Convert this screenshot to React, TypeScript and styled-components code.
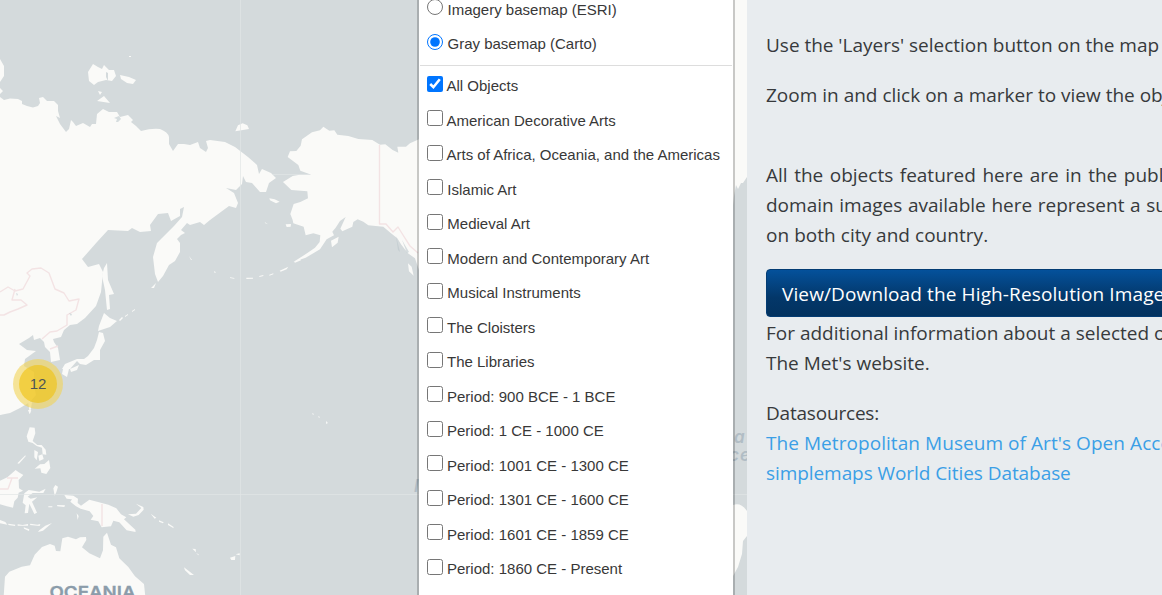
import React from "react";
import styled, { createGlobalStyle } from "styled-components";

const GlobalStyle = createGlobalStyle`
  *, *::before, *::after { box-sizing: border-box; }
  html, body { margin: 0; height: 100%; overflow: hidden; }
  body { background: #e8ecef; }
`;

const Page = styled.div`
  display: grid;
  grid-template-columns: 747px minmax(0, 1fr);
  height: 595px;
  overflow: hidden;
`;

const MapPane = styled.section`
  position: relative;
  overflow: hidden;
  background: #d4dadc;
`;

const MapDrawing = styled.svg`
  display: block;
  width: 747px;
  height: 595px;
`;

const Cluster = styled.div`
  position: absolute;
  left: 13px;
  top: 359px;
  width: 50px;
  height: 50px;
  padding: 6px;
  border-radius: 50%;
  background: rgba(241, 211, 87, 0.6);
`;

const ClusterCount = styled.div`
  width: 38px;
  height: 38px;
  border-radius: 50%;
  background: rgba(240, 194, 12, 0.6);
  color: #4c5458;
  font: 15px/38px "Liberation Sans", Arial, sans-serif;
  text-align: center;
`;

const LayersPanel = styled.div`
  position: absolute;
  left: 417px;
  top: -12px;
  width: 318px;
  height: 630px;
  padding: 2.5px 1px 0;
  border: 2px solid rgba(0, 0, 0, 0.2);
  border-top: 0;
  background: #fff;
  background-clip: padding-box;
`;

const LayerRow = styled.label`
  display: flex;
  align-items: flex-start;
  height: 34.5px;
  padding: 8.6px 0 0 7px;
`;

const LayerInput = styled.input`
  flex: none;
  width: 16px;
  height: 16px;
  margin: 0;
`;

const LayerName = styled.span<{ $gap: number }>`
  margin-left: ${(p) => p.$gap}px;
  padding-top: 1.6px;
  color: #383838;
  font: 15px/18px "Liberation Sans", Arial, sans-serif;
  white-space: nowrap;
`;

const Separator = styled.div`
  height: 1px;
  margin: 5.5px 0 1px;
  background: #ddd;
`;

const InfoPane = styled.main`
  display: flex;
  flex-direction: column;
  align-items: flex-start;
  padding: 30px 0 0 19px;
  overflow: hidden;
  color: #373a3c;
  font: 19px/30px "Open Sans", "Noto Sans", sans-serif;
`;

const Paragraph = styled.div<{ $after: number }>`
  margin-bottom: ${(p) => p.$after}px;
`;

const Line = styled.div<{ $spacing?: number; $words?: number }>`
  letter-spacing: ${(p) => p.$spacing ?? 0}px;
  word-spacing: ${(p) => p.$words ?? 0}px;
  white-space: nowrap;
`;

const SourceLink = styled.a`
  color: #3b9fe6;
  text-decoration: none;
`;

const DownloadButton = styled.button`
  flex: none;
  width: 520px;
  height: 48px;
  margin-bottom: 1px;
  padding: 1px 15px 0;
  border: 1px solid #033c73;
  border-radius: 4px;
  background: linear-gradient(#04519b, #033769 60%, #02325f);
  color: #fff;
  font: 19px/30px "Open Sans", "Noto Sans", sans-serif;
  text-align: left;
`;

type Layer = { name: string; type: "radio" | "checkbox"; checked?: boolean; gap: number };

const basemaps: Layer[] = [
  { name: "Imagery basemap (ESRI)", type: "radio", gap: 4.5 },
  { name: "Gray basemap (Carto)", type: "radio", checked: true, gap: 4.5 },
];

const overlays: Layer[] = [
  { name: "All Objects", type: "checkbox", checked: true, gap: 3.5 },
  { name: "American Decorative Arts", type: "checkbox", gap: 3.5 },
  { name: "Arts of Africa, Oceania, and the Americas", type: "checkbox", gap: 3.5 },
  { name: "Islamic Art", type: "checkbox", gap: 4.3 },
  { name: "Medieval Art", type: "checkbox", gap: 4.3 },
  { name: "Modern and Contemporary Art", type: "checkbox", gap: 4.3 },
  { name: "Musical Instruments", type: "checkbox", gap: 4.3 },
  { name: "The Cloisters", type: "checkbox", gap: 4 },
  { name: "The Libraries", type: "checkbox", gap: 4 },
  { name: "Period: 900 BCE - 1 BCE", type: "checkbox", gap: 4 },
  { name: "Period: 1 CE - 1000 CE", type: "checkbox", gap: 4 },
  { name: "Period: 1001 CE - 1300 CE", type: "checkbox", gap: 4 },
  { name: "Period: 1301 CE - 1600 CE", type: "checkbox", gap: 4 },
  { name: "Period: 1601 CE - 1859 CE", type: "checkbox", gap: 4 },
  { name: "Period: 1860 CE - Present", type: "checkbox", gap: 4 },
];

function LayerOption({ layer }: { layer: Layer }) {
  return (
    <LayerRow>
      <LayerInput type={layer.type} defaultChecked={layer.checked} />
      <LayerName $gap={layer.gap}>{layer.name}</LayerName>
    </LayerRow>
  );
}

function PacificMap() {
  return (
    <MapDrawing viewBox="0 0 747 595">
      <rect width="747" height="595" fill="#d4dadc" />
      <g fill="#fafaf8">
        {/* Siberia, the Far East and China */}
        <path d="M0 97L4 100 10 98.500 18 99 22 101 22 104 27 106 33 107.500 38 106 40 103 39 98 43 97 47 101 54 101 58 105 58 111 60 118 56 116 60 124 63 128 66 132 69 129 71 120 73 122 76 126 83 123 90 127 92 124 96 124 97 114 103 109 109 112 117 112 120 117 128 115 133 120 131 122 136 126 141 131 Q152 128 160 129 Q168 132 169 137L169 144 173 151 178 144 184 144 190 145 198 142 200 148 203 150 206 152 208 148 206 141 210 140 225 142 235 147 248 157 257 165 259 174 262 169 271 173 276 178 269 183 266 192 260 192 252 183 246 182 243 176 242 184 236 190 226 188 234 193 238 203 236 208 229 206 210 220 204 225 200 222 190 225 187 223 181 230 185 233 181 235 177 239 180 243 180 252 175 261 169 265 163 276 158 282 155 274 153 257 157 243 162 238 174 226 182 217 184 207 180 209 180 216 171 221 168 213 158 214 150 225 151 231 140 232 132 228 128 231 108 230 97 242 82 259 88 267 99 264 103 272 101 292 96 306 85 318 77 324 70 325 64 330 61 337 53 339 54 342 58 348 60 360 51 362 50 352 45 347 44 342 40 338 34 340 33 335 29 338 19 344 27 350 36 351 25 359 24 366 34 372 34 385 36 395 30 402 20 408 10 413 0 415Z" />
        <path d="M0 59L4 66 4 76 0 82ZM0 88L3 91 0 94ZM88 72L93 64 98 67 102 69 104 65 109 70 114 70 116 76 112 81 106 80 98 82 94 85 89 81ZM120 75L129 77 136 80 133 84 127 83 121 79ZM97 101L104 96 110 103ZM98 91L102 92 100 95ZM129 56l2 0 0 1-2 0Z" />
        {/* Sakhalin, Japan and Taiwan */}
        <path d="M107 263L108 280 114 294 109 295 110 309 107 310 105 290 102 276 104 268ZM104 313L110 318 117 321 110 327 98 331 99 326ZM99 332L103 333 105 341 100 350 100 360 94 360 86 365 80 364 77 361 70 369 62 369 65 364 77 359 84 359 88 356 94 348 97 340ZM63 369L69 369 67 377 62 374ZM70 369L79 365 77 370 71 372ZM28 402L32 402 30 414Z" />
        <path d="M119 320l3-3 1 1-3 3ZM125 316l3-2 0 1-3 2ZM132 311l3-2 0 1-3 2ZM151 288l5-5-2 5ZM189 256l3 4-1 0Z" />
      </g>
      <g transform="translate(210 50) scale(.3333)" fill="#fafaf8">
        {/* Alaska and the western edge of Canada */}
        <path d="M340 230L358 242 373 241 382 254 415 258 445 267 487 270 510 284 526 283 548 300 565 308 562 290 588 290 600 280 627 268V660L615 625 594 610 574 584 562 565 543 550 520 530 475 526 460 515 443 508 430 516 427 530 397 544 391 536 407 501 390 513 377 533 367 545 372 556 350 568 330 598 310 610 287 623 250 636 291 610 315 593 329 576 331 556 310 550 287 556 281 530 250 520 248 510 241 492 251 462 271 456 294 445 292 424 244 420 219 396 248 378 269 374 304 374 271 362 265 345 233 321 240 304 259 303 272 287 276 268 306 247 330 241Z" />
        <path d="M76 244L84 226 98 220 112 226 117 237ZM178 445L194 448 209 455 198 460 180 451ZM227 523L243 522 242 530 230 531ZM363 572L386 560 383 578 366 592ZM164 516L174 523 166 520ZM252 635L270 626 273 631 255 638ZM209 662L235 650 230 658 212 665ZM178 674l12-4 0 3-12 4ZM148 678l12-3 0 3-12 3ZM109 683l20 0 0 3-20 1ZM60 682l13 2 0 2-13-2ZM12 663l6 4-4 2ZM594 640L605 650 611 677 597 664Z" />
      </g>
      <g transform="translate(0 410) scale(.3333)" fill="#fafaf8">
        {/* Philippines, Indonesia and New Guinea */}
        <path d="M89 52L104 53 106 70 98 93 112 105 125 105 137 119 139 134 128 133 126 113 110 108 98 99 85 95 80 79ZM103 120L114 126 110 151 103 142ZM115 137l12-4 4 14-13 6ZM104 176L120 163 133 162 147 150 151 174 139 192 124 188 121 175ZM52 160L76 136 77 139 57 161ZM0 212L22 202 47 180 56 187 70 195 56 210 57 235 69 242 56 248 53 263 43 274 39 293 18 288 0 283ZM73 250L86 240 101 242 118 245 137 236 130 249 98 249 83 260 92 266 112 262 96 275 111 308 103 312 88 281 84 309 74 310 77 286 68 278ZM160 235l6-10 8 5-5 17-5 10ZM193 255L220 257 234 266 233 279 243 287 268 269 297 277 325 284 349 295 363 313 379 322 372 328 406 359 407 366 380 361 358 337 340 332 333 349 305 352 295 334 272 329 280 318 269 304 242 296 228 289 211 275 216 268 200 266ZM171 285l24 1-2 5-21-2ZM145 289h12v3h-12ZM384 313L408 311 424 294 408 281 430 291 431 299 416 315 400 320ZM452 311L469 323 464 326ZM477 331l14 6-2 3-12-5ZM504 340l16 10 1 5-17-10ZM0 330L16 336 22 344 0 340ZM25 341l21 3-1 4-20-3ZM53 343l15 2 16-3 0 5-31 0ZM91 341l21 3 9-2-2 6-29-3ZM71 352l17 6-1 5-15-7ZM118 361L136 347 156 339 129 362 114 366ZM230 310l6 8-3 12ZM577 416l10 1 1 10ZM588 428l9 6-2 2ZM552 472L582 495 570 495 555 481ZM690 443L706 438 705 450 694 450ZM707 433l12-3 0 6Z" />
        {/* Australia and the southern coast of China */}
        <path d="M11 560L15 500 28 485 65 470 90 466 104 434 126 411 150 402 164 407 168 423 181 424 187 385 204 380 228 388 240 382 258 381 259 390 246 412 268 430 300 445 309 421 310 380 321 368 333 404 348 412 358 445 385 471 405 499 432 522 436 560ZM0 0H40L0 14ZM84 0h10l-5 13Z" />
      </g>
      <g fill="#fafaf8">
        {/* Americas showing beyond the layers panel */}
        <path d="M733 0H747V177L743 183 741 183 738 189 736 185 734 196 733 205ZM733 505Q741 502 747 511V536L743 541 742 554 738 567 733 576Z" />
      </g>
      <g fill="none" stroke="#f3e3e4" strokeWidth="1.400" strokeLinejoin="round">
        <path d="M0 292L8 287 15 291 23 289 30 276 27 273 32 269 41 268 49 273 55 289 64 293 69 301 79 299 76 310 67 315 67 325 57 331 50 332 42 339M15 289L12 300 21 300 27 305 18 309 10 312 4 315 0 315M50 349L58 346" />
        <path d="M379.500 145V224L386 224 393 232 398 227 403 235 410 246 418 253M0 489L8 489 12 478M7 478L18 478M102 504V526" />
      </g>
      <g fill="none" stroke="#e1e5e6">
        <path d="M240.500 0V595M0 494.500H747M273 174.500H310" strokeOpacity=".7" />
      </g>
      <g fill="#b8c4cb">
        <path d="M16 293l2 1-1 2ZM69 313l3 1-1 2ZM114 118l5-2 2 3-3 3-2 0 1-3ZM402 240l7 12-2 1ZM396 236l4 16-2-2Z" opacity=".55" />
      </g>
      <path d="M106 72l2 1 0 8-2-4Z" fill="#d4dadc" />
      <g fill="#f6f7f6">
        <path d="M312 413l2 1-1 1ZM318 416l2 1-1 1ZM326 421l2 2-2 1Z" />
      </g>
      <g fontFamily="Inter, 'Liberation Sans', sans-serif">
        <text x="49.500" y="598" fill="#8b9caa" stroke="#8b9caa" strokeWidth=".3" fontSize="16" fontWeight="600" textLength="86" lengthAdjust="spacingAndGlyphs">OCEANIA</text>
        <g fill="#b1bdc5" fontSize="17" fontStyle="italic" fontWeight="600">
          <text x="734" y="443">a</text>
          <text x="729" y="461" letterSpacing="1">ce</text>
          <text x="414" y="492">l</text>
        </g>
      </g>
    </MapDrawing>
  );
}

export default function App() {
  return (
    <>
      <GlobalStyle />
      <Page>
        <MapPane>
          <PacificMap />
          <Cluster>
            <ClusterCount>12</ClusterCount>
          </Cluster>
          <LayersPanel>
            {basemaps.map((layer) => <LayerOption key={layer.name} layer={layer} />)}
            <Separator />
            {overlays.map((layer) => <LayerOption key={layer.name} layer={layer} />)}
          </LayersPanel>
        </MapPane>
        <InfoPane>
          <Paragraph $after={20}>
            <Line $words={-0.1}>Use the 'Layers' selection button on the map</Line>
          </Paragraph>
          <Paragraph $after={50}>
            <Line>Zoom in and click on a marker to view the object</Line>
          </Paragraph>
          <Paragraph $after={19}>
            <Line $words={1.6}>All the objects featured here are in the public</Line>
            <Line $words={0.7}>domain images available here represent a subset</Line>
            <Line $spacing={0.04}>on both city and country.</Line>
          </Paragraph>
          <DownloadButton>
            <Line $spacing={0.12}>View/Download the High-Resolution Images</Line>
          </DownloadButton>
          <Paragraph $after={20}>
            <Line>For additional information about a selected object</Line>
            <Line>The Met's website.</Line>
          </Paragraph>
          <Paragraph $after={0}>
            <Line $spacing={-0.2}>Datasources:</Line>
            <Line $spacing={0.06}><SourceLink>The Metropolitan Museum of Art's Open Access</SourceLink></Line>
            <Line $spacing={-0.07}><SourceLink>simplemaps World Cities Database</SourceLink></Line>
          </Paragraph>
        </InfoPane>
      </Page>
    </>
  );
}
